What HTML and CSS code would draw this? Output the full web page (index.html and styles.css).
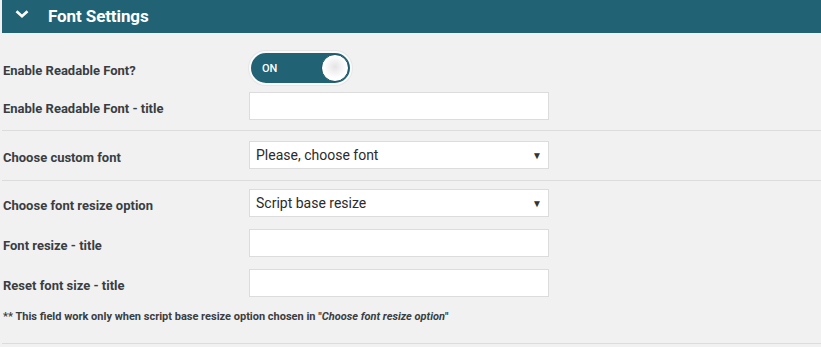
FILE: index.html
```html
<!DOCTYPE html>
<html>
<head>
<meta charset="utf-8">
<link rel="stylesheet" href="styles.css">
</head>
<body>
<div class="panel">
  <div class="header">
    <svg class="chev" width="14" height="8" viewBox="0 0 14 8"><path d="M1.5 1.2 L7 6.2 L12.5 1.2" fill="none" stroke="#fff" stroke-width="2.6"/></svg>
    <span class="title">Font Settings</span>
  </div>
  <div class="group g1">
    <div class="row toggle-row">
      <label class="label">Enable Readable Font?</label>
      <div class="toggle"><span class="on">ON</span><span class="knob"></span></div>
    </div>
    <div class="row">
      <label class="label">Enable Readable Font - title</label>
      <div class="field"></div>
    </div>
  </div>
  <div class="group g2">
    <div class="row">
      <label class="label">Choose custom font</label>
      <div class="field select"><span>Please, choose font</span><span class="arrow">▼</span></div>
    </div>
  </div>
  <div class="group g3">
    <div class="row">
      <label class="label">Choose font resize option</label>
      <div class="field select"><span>Script base resize</span><span class="arrow">▼</span></div>
    </div>
    <div class="row">
      <label class="label">Font resize - title</label>
      <div class="field"></div>
    </div>
    <div class="row">
      <label class="label">Reset font size - title</label>
      <div class="field"></div>
    </div>
    <p class="note">** This field work only when script base resize option chosen in "<em>Choose font resize option</em>"</p>
  </div>
</div>
</body>
</html>
```
FILE: styles.css
```css
html, body {
  margin: 0;
  padding: 0;
  background: #f1f1f1;
}
body {
  font-family: Roboto, "Liberation Sans", sans-serif;
  color: #3a3d42;
}
.panel {
  margin-left: 2px;
}
.header {
  height: 33px;
  background: #216375;
  display: flex;
  align-items: center;
  color: #fff;
}
.chev {
  margin-left: 13px;
  margin-top: -6px;
}
.title {
  margin-left: 19px;
  font-size: 17px;
  font-weight: 700;
  margin-top: -2px;
  letter-spacing: -0.1px;
}
.group {
  border-bottom: 1px solid #dcdcdc;
  display: flex;
  flex-direction: column;
}
.g1 { padding: 18px 0 10px; gap: 7px; }
.g2 { padding: 10px 0 11px; }
.g3 { padding: 8px 0 0; gap: 12px; height: 163px; box-sizing: border-box; }
.row {
  display: flex;
  align-items: center;
}
.label {
  width: 246px;
  padding-left: 1px;
  padding-top: 4px;
  font-size: 13px;
  font-weight: 700;
  color: #3a3d42;
}
.field {
  width: 300px;
  height: 28px;
  box-sizing: border-box;
  background: #fff;
  border: 1px solid #dcdcdc;
}
.select {
  display: flex;
  align-items: center;
  justify-content: space-between;
  padding: 0 6px 0 6px;
  font-size: 14px;
  color: #2b2b2b;
}
.arrow {
  font-size: 10px;
  color: #333;
}
.toggle {
  width: 103px;
  height: 34px;
  box-sizing: border-box;
  border-radius: 17px;
  background: #216375;
  border: 2px solid #fafafa;
  box-shadow: 0 0 0 1px #e6e6e6;
  display: flex;
  align-items: center;
  justify-content: space-between;
  padding: 0 1px 0 11px;
}
.on {
  color: #fff;
  font-size: 11px;
  font-weight: 500;
}
.knob {
  width: 28px;
  height: 28px;
  border-radius: 50%;
  box-sizing: border-box;
  background: radial-gradient(circle at 50% 45%, #e4e4e4 0, #f4f4f4 35%, #fff 60%);
  border: 1px solid #1c5566;
}
.note {
  margin: 1px 0 0;
  padding-left: 1px;
  font-size: 11px;
  font-weight: 700;
  color: #3a3d42;
}
.note em {
  font-style: italic;
}
```
